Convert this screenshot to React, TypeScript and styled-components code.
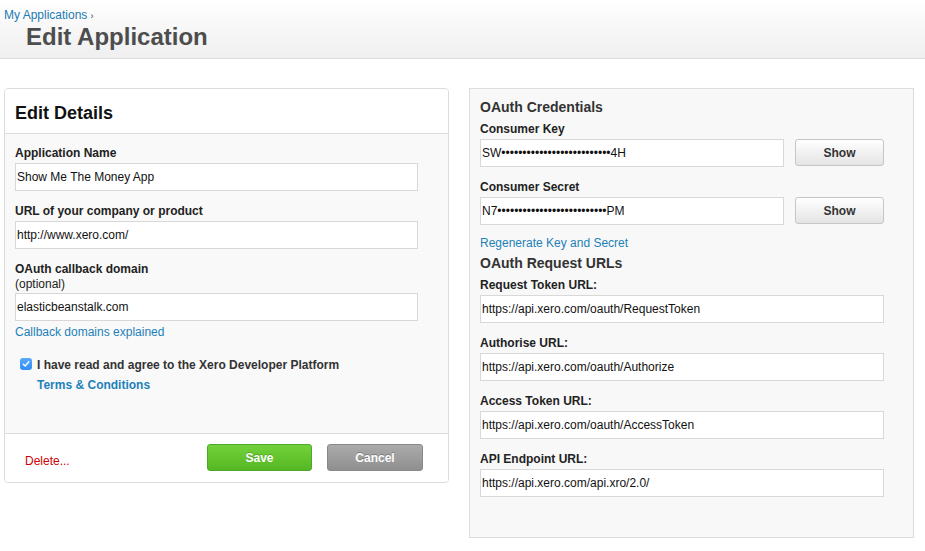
import React from "react";
import styled, { createGlobalStyle } from "styled-components";

const Global = createGlobalStyle`
  html, body { margin: 0; padding: 0; background: #fff; }
  body { font-family: "Liberation Sans", Arial, Helvetica, sans-serif; color: #222; }
  * { box-sizing: border-box; }
`;

const Header = styled.header`
  height: 59px;
  background: linear-gradient(#ffffff, #efefef);
  border-bottom: 1px solid #dcdcdc;
  padding: 8px 0 0 4px;
`;

const Crumb = styled.div`
  font-size: 12px;
  line-height: 14px;
  color: #1c7ab3;
  span { color: #333; font-size: 9px; margin-left: 3px; }
`;

const Title = styled.h1`
  margin: 0 0 0 22px;
  font-size: 24px;
  line-height: 28px;
  font-weight: bold;
  color: #4d4d4d;
`;

const Main = styled.main`
  display: flex;
  align-items: flex-start;
  gap: 20px;
  padding: 29px 0 0 4px;
`;

const Card = styled.section`
  width: 445px;
  border: 1px solid #dcdcdc;
  border-radius: 4px;
  overflow: hidden;
  background: #f9f9f9;
`;

const CardHead = styled.div`
  height: 45px;
  background: #fff;
  border-bottom: 1px solid #dcdcdc;
  padding: 0 10px;
  display: flex;
  align-items: center;
`;

const CardTitle = styled.h2`
  margin: 5px 0 0;
  font-size: 18px;
  font-weight: bold;
  color: #111;
`;

const CardBody = styled.div`
  padding: 11px 10px 0;
  height: 299px;
`;

const Label = styled.label`
  display: block;
  font-size: 12px;
  line-height: 16px;
  font-weight: bold;
  color: #222;
  margin-bottom: 2px;
`;

const Optional = styled.span`
  display: block;
  font-weight: normal;
  line-height: 14px;
`;

const Input = styled.div<{ $w: number; $mb?: number }>`
  width: ${(p) => p.$w}px;
  height: 28px;
  background: #fff;
  border: 1px solid #d8d8d8;
  font-size: 12px;
  line-height: 26px;
  padding: 0 1px;
  color: #111;
  margin-bottom: ${(p) => (p.$mb ?? 12)}px;
  white-space: nowrap;
`;

const Link = styled.a<{ $bold?: boolean }>`
  display: block;
  font-size: 12px;
  line-height: 16px;
  color: #1d81b9;
  text-decoration: none;
  font-weight: ${(p) => (p.$bold ? "bold" : "normal")};
`;

const AgreeRow = styled.div`
  display: flex;
  gap: 5px;
  margin: 15px 0 0 5px;
`;

const Check = styled.span`
  flex: none;
  width: 12px;
  height: 12px;
  margin-top: 3px;
  border-radius: 3px;
  background: linear-gradient(#5aa9fb, #2f8ef5);
  display: flex;
  align-items: center;
  justify-content: center;
`;

const AgreeText = styled.div`
  font-size: 12px;
  line-height: 20px;
  font-weight: bold;
  color: #333;
  a { line-height: 20px; }
`;

const CardFoot = styled.div`
  border-top: 1px solid #dcdcdc;
  background: #fff;
  height: 49px;
  display: flex;
  align-items: center;
  padding: 0 25px 0 20px;
`;

const Delete = styled.a`
  font-size: 12px;
  color: #cc0000;
  margin-right: auto;
  margin-top: 5px;
`;

const Btn = styled.button<{ $kind: "save" | "cancel" | "plain"; $w: number }>`
  width: ${(p) => p.$w}px;
  height: 27px;
  border-radius: 3px;
  font-family: inherit;
  font-size: 12px;
  font-weight: bold;
  cursor: pointer;
  padding: 0;
  ${(p) =>
    p.$kind === "save"
      ? `background: linear-gradient(#72d23b, #55b722); border: 1px solid #4ea72a; color: #fff; text-shadow: 0 -1px 0 rgba(0,0,0,0.2);`
      : p.$kind === "cancel"
      ? `background: linear-gradient(#ababab, #8f8f8f); border: 1px solid #888; color: #fff; text-shadow: 0 -1px 0 rgba(0,0,0,0.25);`
      : `background: linear-gradient(#ffffff, #e4e4e4); border: 1px solid #c6c6c6; color: #333;`}
`;

const FootButtons = styled.div`
  display: flex;
  gap: 15px;
  margin-top: -1px;
`;

const Panel = styled.section`
  width: 445px;
  height: 450px;
  border: 1px solid #dcdcdc;
  background: #f8f8f8;
  padding: 9px 10px 0;
`;

const PanelTitle = styled.h3`
  margin: 0 0 5px;
  font-size: 14px;
  line-height: 18px;
  font-weight: bold;
  color: #333;
`;

const Row = styled.div`
  display: flex;
  gap: 11px;
`;

const Regen = styled(Link)`
  margin: -2px 0 3px;
`;

const dots = "\u2022".repeat(26);

export default function App() {
  return (
    <>
      <Global />
      <Header>
        <Crumb>
          My Applications<span>›</span>
        </Crumb>
        <Title>Edit Application</Title>
      </Header>
      <Main>
        <Card>
          <CardHead>
            <CardTitle>Edit Details</CardTitle>
          </CardHead>
          <CardBody>
            <Label>Application Name</Label>
            <Input $w={403}>Show Me The Money App</Input>
            <Label>URL of your company or product</Label>
            <Input $w={403}>http://www.xero.com/</Input>
            <Label>
              OAuth callback domain
              <Optional>(optional)</Optional>
            </Label>
            <Input $w={403} $mb={3}>
              elasticbeanstalk.com
            </Input>
            <Link>Callback domains explained</Link>
            <AgreeRow>
              <Check>
                <svg width="8" height="8" viewBox="0 0 8 8">
                  <path d="M1.3 4.2 L3.2 6 L6.8 1.8" fill="none" stroke="#fff" strokeWidth="1.4" strokeLinecap="round" strokeLinejoin="round" />
                </svg>
              </Check>
              <AgreeText>
                I have read and agree to the Xero Developer Platform
                <Link $bold>Terms &amp; Conditions</Link>
              </AgreeText>
            </AgreeRow>
          </CardBody>
          <CardFoot>
            <Delete>Delete...</Delete>
            <FootButtons>
              <Btn $kind="save" $w={105}>Save</Btn>
              <Btn $kind="cancel" $w={96}>Cancel</Btn>
            </FootButtons>
          </CardFoot>
        </Card>
        <Panel>
          <PanelTitle>OAuth Credentials</PanelTitle>
          <Label>Consumer Key</Label>
          <Row>
            <Input $w={304}>SW{dots}4H</Input>
            <Btn $kind="plain" $w={89}>Show</Btn>
          </Row>
          <Label>Consumer Secret</Label>
          <Row>
            <Input $w={304}>N7{dots}PM</Input>
            <Btn $kind="plain" $w={89}>Show</Btn>
          </Row>
          <Regen>Regenerate Key and Secret</Regen>
          <PanelTitle>OAuth Request URLs</PanelTitle>
          <Label>Request Token URL:</Label>
          <Input $w={404}>https://api.xero.com/oauth/RequestToken</Input>
          <Label>Authorise URL:</Label>
          <Input $w={404}>https://api.xero.com/oauth/Authorize</Input>
          <Label>Access Token URL:</Label>
          <Input $w={404}>https://api.xero.com/oauth/AccessToken</Input>
          <Label>API Endpoint URL:</Label>
          <Input $w={404}>https://api.xero.com/api.xro/2.0/</Input>
        </Panel>
      </Main>
    </>
  );
}
